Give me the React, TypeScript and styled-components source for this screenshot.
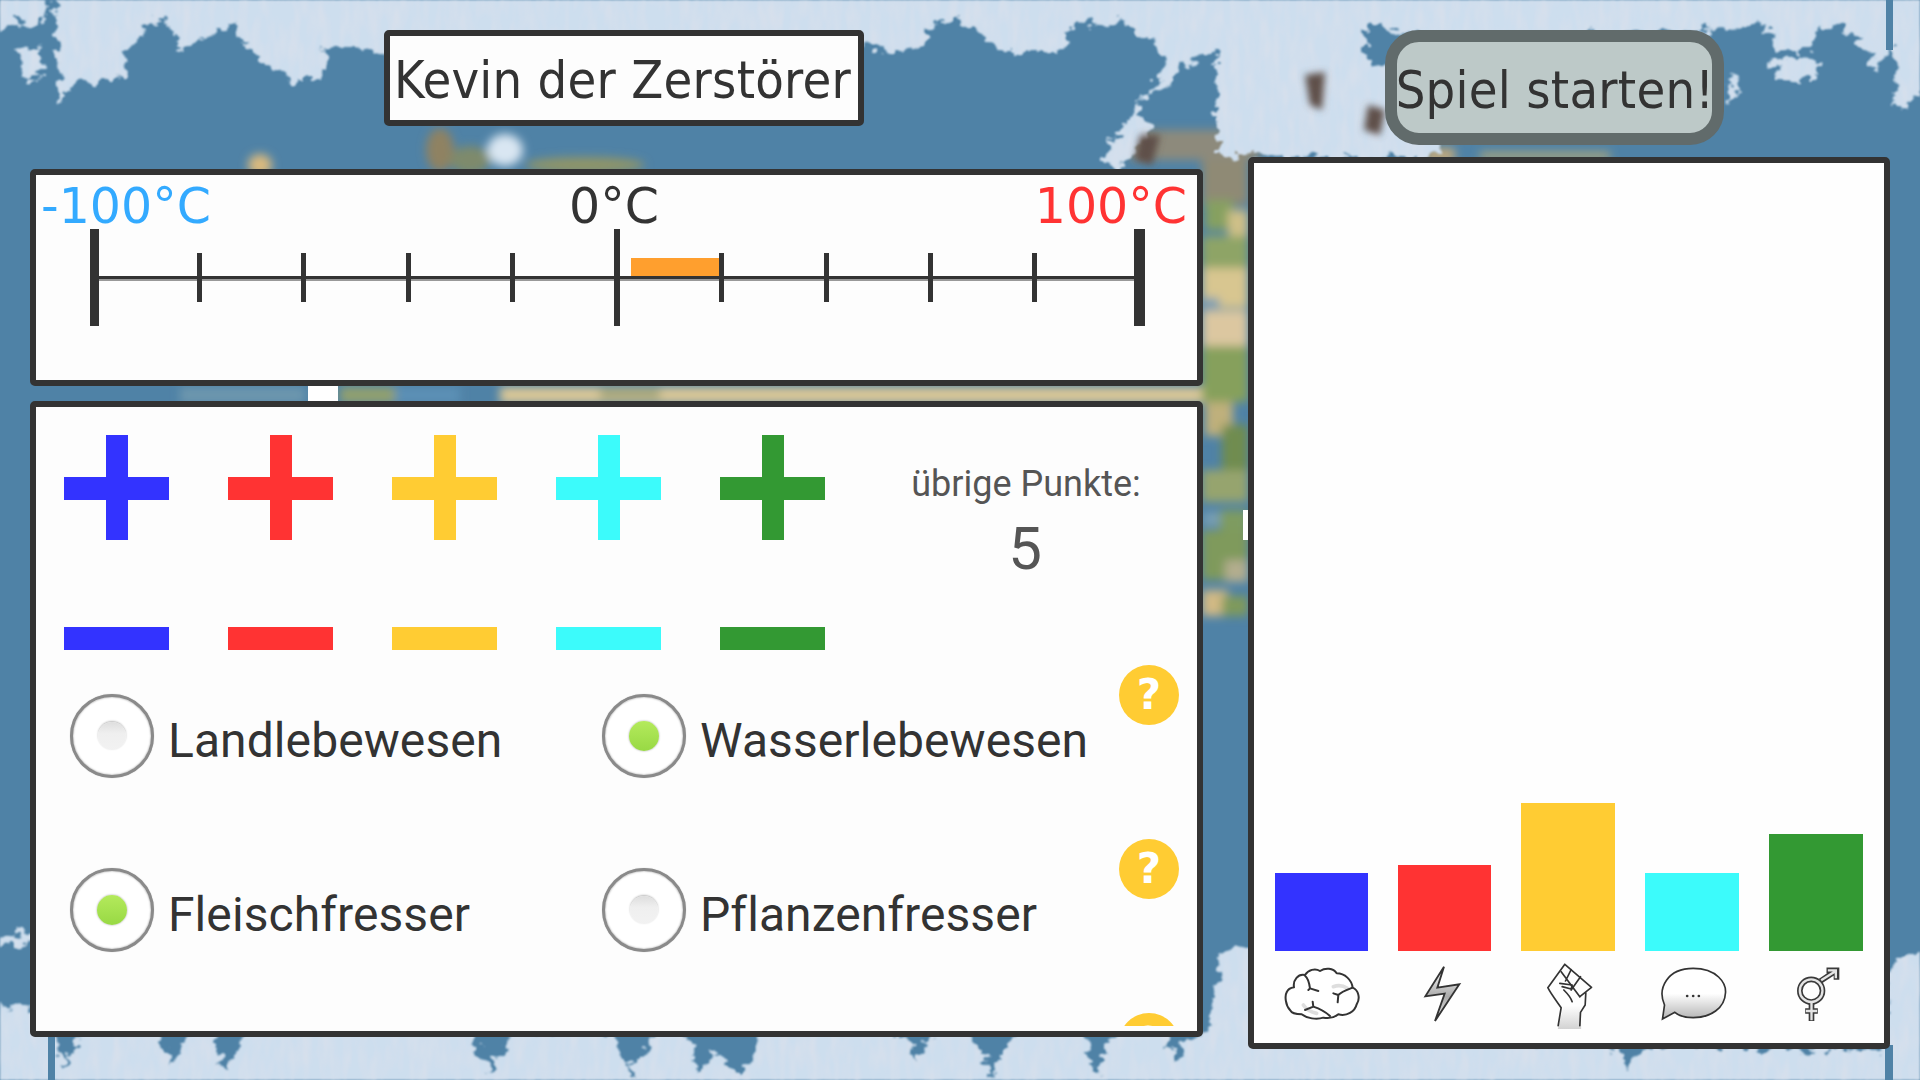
import React from "react";
import styled, { createGlobalStyle, css } from "styled-components";

const Global = createGlobalStyle`
  html, body { margin: 0; padding: 0; background: #4f82a6; }
  #root { width: 1920px; height: 1080px; overflow: hidden; }
`;

const INK = "#333333";
const COLORS = ["#3333ff", "#ff3333", "#ffcc33", "#3cfbfb", "#339933"];

const Screen = styled.div`
  position: relative;
  width: 1920px;
  height: 1080px;
  overflow: hidden;
  display: flex;
  align-items: flex-start;
  background: #4f82a6;
`;

const MapBackdrop = styled.svg`
  position: absolute;
  inset: 0;
  width: 1920px;
  height: 1080px;
`;

const LeftColumn = styled.div`
  position: relative;
  width: 1173px;
  margin-left: 30px;
  padding-top: 30px;
  display: flex;
  flex-direction: column;
`;

const RightColumn = styled.div`
  position: relative;
  width: 642px;
  margin-left: 45px;
  padding-top: 30px;
  display: flex;
  flex-direction: column;
`;

const frame = css`
  box-sizing: border-box;
  border: 6px solid ${INK};
  border-radius: 5px;
  background: #fdfdfd;
`;

const NameBox = styled.div`
  ${frame}
  width: 480px;
  height: 96px;
  margin-left: 354px;
  padding: 3px 3px 0 0;
  display: flex;
  align-items: center;
  justify-content: center;
  font-family: "DejaVu Sans", sans-serif;
  font-stretch: condensed;
  font-size: 52px;
  letter-spacing: 0.25px;
  color: ${INK};
  white-space: nowrap;
`;

const StartButton = styled.button`
  box-sizing: border-box;
  width: 339px;
  height: 115px;
  margin-left: 137px;
  padding: 5px 0 0 1px;
  border: 12px solid #616b6b;
  border-radius: 34px;
  background: #bdc9c8;
  font-family: "DejaVu Sans", sans-serif;
  font-stretch: condensed;
  font-size: 52px;
  letter-spacing: 0.25px;
  line-height: 1;
  color: ${INK};
  white-space: nowrap;
  display: flex;
  align-items: center;
  justify-content: center;
`;

const ThermoPanel = styled.section`
  ${frame}
  width: 1173px;
  height: 217px;
  margin-top: 43px;
`;

const ThermoLabels = styled.div`
  display: grid;
  grid-template-columns: 1fr auto 1fr;
  height: 54px;
  padding: 3px 10px 0 5px;
  box-sizing: border-box;
  font-family: "DejaVu Sans", sans-serif;
  font-size: 49px;
  line-height: 58px;
  white-space: nowrap;
`;

const ThermoLabel = styled.span<{ $color: string; $align: string }>`
  color: ${(p) => p.$color};
  text-align: ${(p) => p.$align};
`;

const RulerSvg = styled.svg`
  display: block;
  width: 1160px;
  height: 97px;
`;

const ControlPanel = styled.section`
  ${frame}
  width: 1173px;
  height: 636px;
  margin-top: 15px;
  padding-bottom: 5px;
`;

const ScrollArea = styled.div`
  height: 619px;
  overflow: hidden;
  padding: 28px 0 0 28px;
  box-sizing: border-box;
`;

const ControlsRow = styled.div`
  display: flex;
  align-items: flex-start;
`;

const StepGrid = styled.div`
  display: grid;
  grid-template-columns: repeat(5, 105px);
  column-gap: 59px;
  row-gap: 87px;
`;

const PlusIcon = styled.svg`
  display: block;
  width: 105px;
  height: 105px;
`;

const MinusBar = styled.div<{ $color: string }>`
  width: 105px;
  height: 23px;
  background: ${(p) => p.$color};
`;

const Points = styled.div`
  width: 240px;
  margin-left: 81px;
  padding-top: 28px;
  display: flex;
  flex-direction: column;
  align-items: center;
  font-family: Roboto, sans-serif;
  color: #555555;
`;

const PointsLabel = styled.div`
  font-size: 36px;
  line-height: 42px;
  white-space: nowrap;
`;

const PointsValue = styled.div`
  margin-top: 9px;
  padding-right: 2px;
  font-size: 60px;
  line-height: 70px;
`;

const OptionRow = styled.div<{ $first?: boolean }>`
  display: grid;
  grid-template-columns: 532px 517px 60px;
  height: 84px;
  margin-left: 6px;
  margin-top: ${(p) => (p.$first ? 44 : 0)}px;
  margin-bottom: 90px;
`;

const Option = styled.label`
  display: flex;
  align-items: flex-start;
  gap: 14px;
`;

const Radio = styled.span<{ $on?: boolean }>`
  box-sizing: border-box;
  width: 84px;
  height: 84px;
  flex: none;
  border: 3px solid #8a8a8a;
  border-radius: 50%;
  background: #ffffff;
  box-shadow: inset 0 0 2px #999999, 0 0 1px #aaaaaa;
  display: flex;
  align-items: center;
  justify-content: center;
  &::after {
    content: "";
    width: ${(p) => (p.$on ? 30 : 28)}px;
    height: ${(p) => (p.$on ? 30 : 28)}px;
    border-radius: 50%;
    background: ${(p) => (p.$on ? "linear-gradient(#b4ea5c, #98d944)" : "linear-gradient(#dedede, #efefef 40%, #f2f2f2)")};
    box-shadow: ${(p) => (p.$on ? "0 0 2px #999" : "0 -1px 2px #bbb")};
  }
`;

const OptionText = styled.span`
  font-family: Roboto, sans-serif;
  font-size: 48px;
  letter-spacing: 0.08px;
  line-height: 56px;
  color: ${INK};
  padding-top: 19px;
  white-space: nowrap;
`;

const Help = styled.div`
  width: 60px;
  height: 60px;
  margin-top: -29px;
  border-radius: 50%;
  background: #ffcc33;
  color: #ffffff;
  font-family: "DejaVu Sans", sans-serif;
  font-weight: 700;
  font-size: 42px;
  line-height: 60px;
  text-align: center;
`;

const StatsPanel = styled.section`
  ${frame}
  width: 642px;
  height: 892px;
  margin-top: 12px;
  background: #fefefe;
  display: flex;
  flex-direction: column;
  justify-content: flex-end;
  padding: 0 21px 13px;
`;

const Bars = styled.div`
  display: flex;
  gap: 30px;
  align-items: flex-end;
`;

const Bar = styled.div<{ $color: string; $h: number; $w: number }>`
  width: ${(p) => p.$w}px;
  height: ${(p) => p.$h}px;
  background: ${(p) => p.$color};
`;

const Icons = styled.div`
  display: flex;
  gap: 30px;
  margin-top: 9px;
`;

const StatIcon = styled.svg<{ $w: number }>`
  display: block;
  width: ${(p) => p.$w}px;
  height: 70px;
`;

type IconProps = { w: number };

const Brain = ({ w }: IconProps) => (
  <StatIcon $w={w} viewBox="15 15 279 210" fill="none" stroke="#333" strokeWidth="6" strokeLinecap="round" strokeLinejoin="round">
    <path fill="#fff" d="M60 165C46 150 44 122 50 112C55 100 65 98 72 97C68 75 85 55 105 60C115 45 135 38 150 48C165 38 190 38 200 55C225 55 245 75 248 98C265 105 272 130 260 148C255 170 230 185 205 178C190 190 170 190 160 188C140 195 110 190 95 178C80 178 65 175 60 165Z" />
    <path d="M190 95C205 90 220 92 232 100M100 150C110 165 125 172 140 175" stroke="#d0d0d0" strokeWidth="11" opacity=".7" />
    <path d="M105 62C115 70 118 85 120 100L145 108M120 100L115 105M248 98C230 105 215 110 205 120L203 142M205 120L190 115M128 140L130 155C145 160 160 165 180 183M130 155L105 165" />
  </StatIcon>
);

const Bolt = ({ w }: IconProps) => (
  <StatIcon $w={w} viewBox="384 15 279 210" fill="none" strokeLinejoin="miter">
    <defs>
      <linearGradient id="boltShade" x1="0" y1="0" x2="0" y2="1">
        <stop offset="0" stopColor="#fff" />
        <stop offset=".55" stopColor="#aaa" />
        <stop offset="1" stopColor="#eee" />
      </linearGradient>
    </defs>
    <path fill="url(#boltShade)" stroke="#333" strokeWidth="5.5" d="M522 35L466 124L524 116L495 198L568 88L502 98Z" />
  </StatIcon>
);

const Fist = ({ w }: IconProps) => (
  <StatIcon $w={w} viewBox="-27 15 279 210" fill="none" stroke="#333" strokeWidth="5" strokeLinejoin="round" strokeLinecap="round">
    <defs>
      <linearGradient id="wristShade" x1="0" y1="0" x2="0" y2="1">
        <stop offset="0" stopColor="#fff" />
        <stop offset="1" stopColor="#c4c4c4" />
      </linearGradient>
    </defs>
    <path stroke="none" fill="url(#wristShade)" d="M100 150L150 150L152 222L82 222Z" opacity=".75" />
    <path d="M103 28L52 98C62 118 78 138 92 158L83 212M183 97L148 125M166 113L164 150L150 172L148 212M103 28L183 97" />
    <path d="M92 50L148 125M122 44L105 78M150 65L122 105" />
    <path d="M88 85L125 90L122 102L95 95M100 105C110 115 120 125 125 140" />
  </StatIcon>
);

const Speech = ({ w }: IconProps) => (
  <StatIcon $w={w} viewBox="345 15 279 210" fill="none">
    <defs>
      <linearGradient id="speechShade" x1="0" y1="0" x2="0" y2="1">
        <stop offset="0" stopColor="#fff" />
        <stop offset=".5" stopColor="#fff" />
        <stop offset="1" stopColor="#b4b4b4" />
      </linearGradient>
    </defs>
    <path fill="url(#speechShade)" stroke="#333" strokeWidth="5" d="M402 150C380 100 410 40 488 40C560 40 587 85 585 113C583 160 540 188 488 188C465 188 445 182 433 172L396 192Z" />
    <circle cx="470" cy="123" r="4" fill="#333" />
    <circle cx="488" cy="123" r="4" fill="#333" />
    <circle cx="505" cy="123" r="4" fill="#333" />
  </StatIcon>
);

const Gender = ({ w }: IconProps) => (
  <StatIcon $w={w} viewBox="717 15 279 210" fill="none" strokeLinejoin="miter">
    <g stroke="#3a3a3a" strokeWidth="17">
      <circle cx="842" cy="107" r="34" />
      <path d="M843 147V198M824 168H862M870 78L918 46M888 46H918V74" />
    </g>
    <g stroke="#e4e4e4" strokeWidth="7">
      <circle cx="842" cy="107" r="34" />
      <path d="M843 143V196M826 168H860M872 76L916 48M892 46H916V70" />
    </g>
  </StatIcon>
);

const TICKS = [197, 301, 406, 510, 719, 824, 928, 1032];

const Ruler = () => (
  <RulerSvg viewBox="36 229 1160 97">
    <rect x="95" y="276" width="1045" height="3" fill="#333" />
    <rect x="95" y="279" width="1045" height="2" fill="#999" />
    <rect x="631" y="258" width="88" height="18" fill="#ff9f2e" />
    {TICKS.map((x) => (
      <rect key={x} x={x} y="253" width="5" height="49" fill="#333" />
    ))}
    <rect x="614" y="229" width="6" height="97" fill="#333" />
    <rect x="90" y="229" width="9" height="97" fill="#333" />
    <rect x="1134" y="229" width="11" height="97" fill="#333" />
  </RulerSvg>
);

const MapArt = () => (
  <MapBackdrop viewBox="0 0 1920 1080">
    <defs>
      <filter id="soft" filterUnits="userSpaceOnUse" x="0" y="0" width="1920" height="1080">
        <feGaussianBlur stdDeviation="3.5" />
      </filter>
      <filter id="softer" filterUnits="userSpaceOnUse" x="0" y="0" width="1920" height="1080">
        <feGaussianBlur stdDeviation="5" />
      </filter>
      <filter id="iceGrain" filterUnits="userSpaceOnUse" x="0" y="0" width="1920" height="1080">
        <feTurbulence type="fractalNoise" baseFrequency="0.07 0.1" numOctaves="3" seed="7" result="rough" />
        <feDisplacementMap in="SourceGraphic" in2="rough" scale="24" xChannelSelector="R" yChannelSelector="G" result="edge" />
        <feGaussianBlur in="edge" stdDeviation="0.8" result="edgeSoft" />
        <feTurbulence type="fractalNoise" baseFrequency="0.1 0.03" numOctaves="2" seed="4" result="n" />
        <feColorMatrix in="n" type="matrix" values="0 0 0 0 0.70  0 0 0 0 0.75  0 0 0 0 0.83  1.4 0 0 0 -0.5" result="g" />
        <feComposite in="g" in2="edgeSoft" operator="in" result="c" />
        <feMerge>
          <feMergeNode in="edgeSoft" />
          <feMergeNode in="c" />
        </feMerge>
      </filter>
    </defs>
    <rect width="1920" height="1080" fill="#4f82a6" />
    <g filter="url(#softer)">
      <ellipse cx="260" cy="165" rx="12" ry="11" fill="#d9b97e" />
      <ellipse cx="505" cy="150" rx="18" ry="16" fill="#d9e6f2" />
      <ellipse cx="440" cy="150" rx="14" ry="22" fill="#8f8262" />
      <ellipse cx="470" cy="160" rx="20" ry="14" fill="#7e8a6c" />
      <ellipse cx="585" cy="165" rx="60" ry="8" fill="#8f9468" />
      <rect x="180" y="387" width="125" height="16" fill="#6d97ae" />
      <rect x="340" y="387" width="55" height="16" fill="#93a06e" />
      <rect x="395" y="387" width="65" height="16" fill="#5b90b6" />
      <rect x="500" y="387" width="720" height="16" fill="#dcc896" />
      <rect x="600" y="389" width="60" height="10" fill="#a3a477" />
      <rect x="1130" y="130" width="130" height="30" fill="#8d8a7c" />
      <rect x="1202" y="160" width="46" height="45" fill="#8f8a74" />
      <rect x="1205" y="200" width="28" height="30" fill="#86a060" />
      <rect x="1228" y="210" width="20" height="28" fill="#cfc088" />
      <rect x="1202" y="236" width="46" height="32" fill="#8ea466" />
      <rect x="1202" y="268" width="46" height="40" fill="#d8c690" />
      <rect x="1203" y="298" width="16" height="10" fill="#7a9fb4" />
      <rect x="1202" y="310" width="46" height="36" fill="#dcc7a0" />
      <rect x="1202" y="346" width="46" height="56" fill="#86a05c" />
      <rect x="1205" y="402" width="28" height="34" fill="#bfb07c" />
      <rect x="1222" y="425" width="26" height="50" fill="#6f8c50" />
      <rect x="1202" y="470" width="46" height="32" fill="#96a46e" />
      <rect x="1203" y="512" width="18" height="14" fill="#789fb4" />
      <rect x="1220" y="510" width="28" height="30" fill="#7e9b60" />
      <rect x="1202" y="530" width="46" height="50" fill="#7f9a5c" />
      <rect x="1225" y="560" width="23" height="22" fill="#b3ad8e" />
      <rect x="1202" y="590" width="26" height="26" fill="#d1b985" />
      <rect x="1222" y="596" width="26" height="20" fill="#7f9a5c" />
      <rect x="1425" y="148" width="30" height="14" fill="#bfa77c" />
      <rect x="1480" y="152" width="130" height="8" fill="#a9a47c" />
    </g>
    <rect x="1243" y="510" width="6" height="30" fill="#fff" />
    <rect x="308" y="386" width="30" height="16" fill="#fff" />
    <g>
      <g filter="url(#iceGrain)" fill="#cddeee">
        <path d="M-20 -20H47V18L30 25L20 18L10 25L-20 48Z" />
        <path d="M15 48L40 50L42 78L22 80Z" />
        <path d="M55 -20H1940V85L1897 107L1893 45L1875 70L1860 40L1840 25L1820 30L1810 50L1780 50L1770 30L1755 20L1730 30L1440 40L1385 27H1365V60L1440 80V150L1425 158L1217 156V52L1194 55L1170 85L1155 92L1140 95L1142 115L1150 130L1120 168L1100 160L1165 70L1155 40L1130 25L1075 22L1060 52L1000 52L960 18L930 20L925 45L900 52L860 45H440L400 53L340 45L320 50L330 55L320 80L290 80L275 70L250 50L235 27L215 30L195 42L180 50L170 28L165 18L150 25L128 45L125 78L100 80L75 80L66 95L60 107L58 60Z" />
        <path d="M1769 60L1800 57L1822 62L1815 80L1780 80Z" />
        <path d="M1728 75L1740 85L1730 105Z" />
        <path d="M1893 955L1940 955V1100H-20V1005L45 1010L47 1030L55 1030L62 1068L85 1030L160 1030L172 1066L190 1030L212 1030L226 1074L245 1030L470 1030L490 1074L510 1030L615 1030L630 1074L655 1030L685 1030L698 1076L715 1050L741 1076L765 1030L900 1030L918 1062L935 1030L970 1030L992 1076L1015 1030L1085 1030L1096 1072L1115 1030L1165 1030L1175 1062L1195 1030L1250 1030L1610 1045L1628 1070L1650 1045L1880 1050Z" />
        <path d="M-20 940L20 932L32 938L20 948L-20 950Z" />
        <path d="M1222 960L1240 945L1260 950V1030L1215 1040L1204 1035Z" />
      </g>
      <rect x="48" y="1030" width="7" height="50" fill="#4f82a6" />
      <rect x="1885" y="1045" width="8" height="35" fill="#4f82a6" />
      <rect x="1886" y="0" width="7" height="50" fill="#4f82a6" />
      <g filter="url(#soft)" fill="#5f5048">
        <path d="M1305 75L1325 72L1322 110L1310 105Z" />
        <path d="M1368 105L1385 110L1380 135L1364 130Z" />
        <path d="M1140 135L1160 135L1152 165L1135 160Z" />
      </g>
    </g>
  </MapBackdrop>
);

const Plus = ({ color }: { color: string }) => (
  <PlusIcon viewBox="0 0 105 105">
    <rect x="42" width="22" height="105" fill={color} />
    <rect y="42" width="105" height="23" fill={color} />
  </PlusIcon>
);

const OPTION_ROWS = [
  [{ label: "Landlebewesen", on: false }, { label: "Wasserlebewesen", on: true }],
  [{ label: "Fleischfresser", on: true }, { label: "Pflanzenfresser", on: false }],
];

const BARS = [
  { h: 78, w: 93 },
  { h: 86, w: 93 },
  { h: 148, w: 94 },
  { h: 78, w: 94 },
  { h: 117, w: 94 },
];
const ICONS = [Brain, Bolt, Fist, Speech, Gender];

export default function App() {
  return (
    <Screen>
      <Global />
      <MapArt />
      <LeftColumn>
        <NameBox>Kevin der Zerstörer</NameBox>
        <ThermoPanel>
          <ThermoLabels>
            <ThermoLabel $color="#33aaff" $align="left">-100°C</ThermoLabel>
            <ThermoLabel $color={INK} $align="center">0°C</ThermoLabel>
            <ThermoLabel $color="#ff3333" $align="right">100°C</ThermoLabel>
          </ThermoLabels>
          <Ruler />
        </ThermoPanel>
        <ControlPanel>
          <ScrollArea>
            <ControlsRow>
              <StepGrid>
                {COLORS.map((c) => <Plus key={c} color={c} />)}
                {COLORS.map((c) => <MinusBar key={c} $color={c} />)}
              </StepGrid>
              <Points>
                <PointsLabel>übrige Punkte:</PointsLabel>
                <PointsValue>5</PointsValue>
              </Points>
            </ControlsRow>
            {OPTION_ROWS.map((row, i) => (
              <OptionRow key={i} $first={i === 0}>
                {row.map((o) => (
                  <Option key={o.label}>
                    <Radio $on={o.on} />
                    <OptionText>{o.label}</OptionText>
                  </Option>
                ))}
                <Help>?</Help>
              </OptionRow>
            ))}
            <OptionRow>
              <span />
              <span />
              <Help>?</Help>
            </OptionRow>
          </ScrollArea>
        </ControlPanel>
      </LeftColumn>
      <RightColumn>
        <StartButton>Spiel starten!</StartButton>
        <StatsPanel>
          <Bars>
            {BARS.map((b, i) => <Bar key={i} $color={COLORS[i]} $h={b.h} $w={b.w} />)}
          </Bars>
          <Icons>
            {ICONS.map((I, i) => <I key={i} w={BARS[i].w} />)}
          </Icons>
        </StatsPanel>
      </RightColumn>
    </Screen>
  );
}
